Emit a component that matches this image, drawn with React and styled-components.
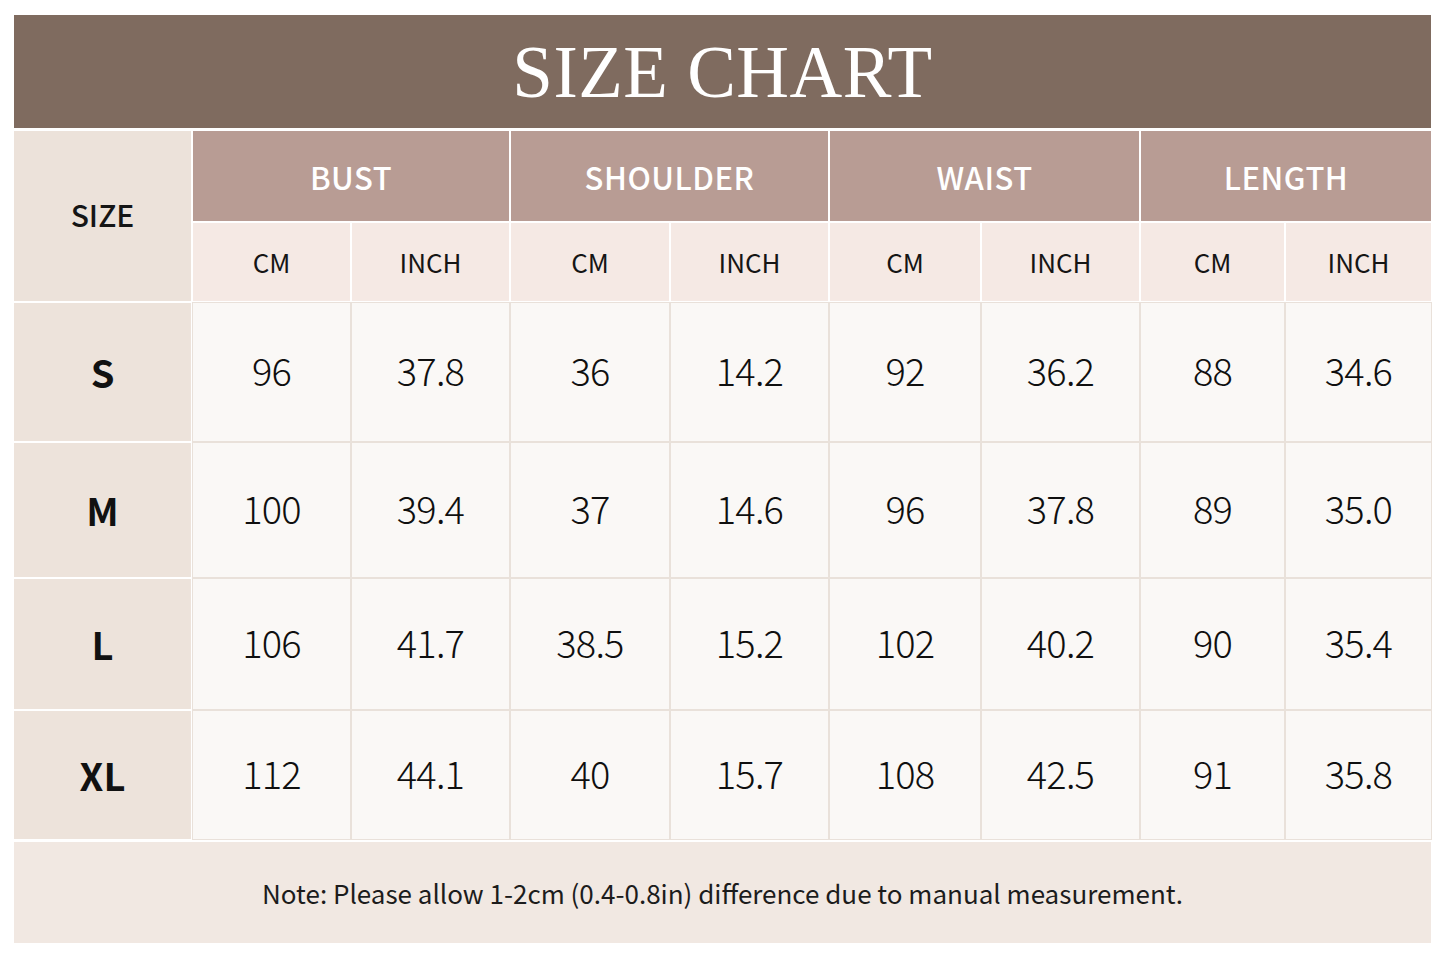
import React from "react";
import styled, { createGlobalStyle } from "styled-components";

const Global = createGlobalStyle`
  html, body { margin: 0; padding: 0; background: #ffffff; }
  body { font-family: "Noto Sans CJK JP", "Noto Sans", sans-serif; color: #1a1a1a; }
`;

const Page = styled.div`
  width: 1445px;
  height: 963px;
  box-sizing: border-box;
  padding: 15px 14px 0 14px;
  background: #ffffff;
`;

const TitleBar = styled.div`
  height: 113px;
  background: #7f6b5f;
  display: flex;
  align-items: center;
  justify-content: center;
  margin-bottom: 3px;
`;

const Title = styled.h1`
  margin: 0;
  font-family: "Liberation Serif", "Times New Roman", serif;
  font-weight: 400;
  font-size: 73px;
  letter-spacing: 0.5px;
  color: #ffffff;
  line-height: 1;
  padding-top: 2px;
`;

const Grid = styled.div`
  display: grid;
  grid-template-columns: 177px 157px 157px 158px 157px 150px 157px 143px 145px;
  grid-template-rows: 90px 78px 138px 134px 130px 128px;
  gap: 2px;
  background: #ffffff;
`;

const Cell = styled.div`
  display: flex;
  align-items: center;
  justify-content: center;
  line-height: 1;
`;

const SizeHead = styled(Cell)`
  grid-row: 1 / span 2;
  background: #ece2da;
  font-size: 30px;
  font-weight: 500;
  color: #151515;
  padding-bottom: 4px;
`;

const GroupHead = styled(Cell)`
  grid-column: span 2;
  background: #b89c94;
  color: #ffffff;
  font-size: 31px;
  font-weight: 500;
  letter-spacing: 0.5px;
  padding-top: 1px;
`;

const UnitHead = styled(Cell)`
  background: #f5e9e4;
  font-size: 26px;
  font-weight: 400;
  color: #151515;
`;

const SizeLabel = styled(Cell)`
  background: #ede3db;
  font-size: 38px;
  font-weight: 700;
  color: #111111;
  padding-bottom: 1px;
`;

const Value = styled(Cell)`
  background: #faf8f6;
  box-shadow: 0 0 0 1px #e9e1da;
  font-size: 38px;
  font-weight: 300;
  letter-spacing: -0.8px;
  color: #0f0f0f;
  padding-bottom: 4px;
`;

const Note = styled.div`
  margin-top: 3px;
  height: 101px;
  background: #f1e8e2;
  display: flex;
  align-items: center;
  justify-content: center;
  font-size: 26px;
  font-weight: 400;
  letter-spacing: 0;
  color: #1c1c1c;
`;

const groups = ["BUST", "SHOULDER", "WAIST", "LENGTH"];

const rows = [
  { size: "S", values: ["96", "37.8", "36", "14.2", "92", "36.2", "88", "34.6"] },
  { size: "M", values: ["100", "39.4", "37", "14.6", "96", "37.8", "89", "35.0"] },
  { size: "L", values: ["106", "41.7", "38.5", "15.2", "102", "40.2", "90", "35.4"] },
  { size: "XL", values: ["112", "44.1", "40", "15.7", "108", "42.5", "91", "35.8"] },
];

export default function App() {
  return (
    <>
      <Global />
      <Page>
        <TitleBar>
          <Title>SIZE CHART</Title>
        </TitleBar>
        <Grid>
          <SizeHead>SIZE</SizeHead>
          {groups.map((g) => (
            <GroupHead key={g}>{g}</GroupHead>
          ))}
          {groups.map((g) => (
            <React.Fragment key={g + "-u"}>
              <UnitHead>CM</UnitHead>
              <UnitHead>INCH</UnitHead>
            </React.Fragment>
          ))}
          {rows.map((r) => (
            <React.Fragment key={r.size}>
              <SizeLabel>{r.size}</SizeLabel>
              {r.values.map((v, i) => (
                <Value key={i}>{v}</Value>
              ))}
            </React.Fragment>
          ))}
        </Grid>
        <Note>Note: Please allow 1-2cm (0.4-0.8in) difference due to manual measurement.</Note>
      </Page>
    </>
  );
}
